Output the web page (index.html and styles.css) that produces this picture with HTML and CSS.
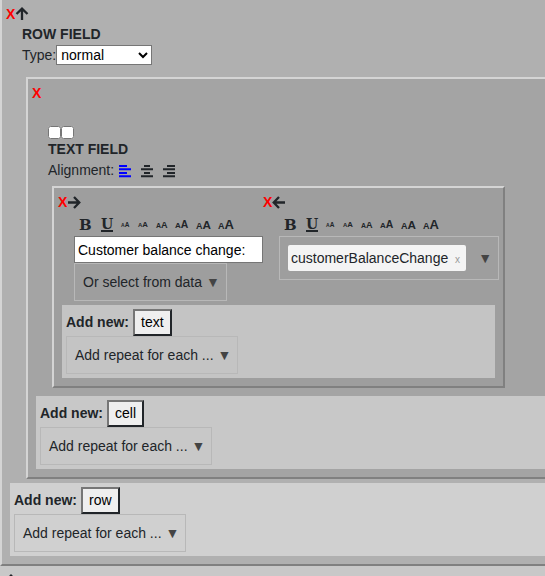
FILE: index.html
```
<!DOCTYPE html>
<html lang="en">

<head>
  <meta charset="utf-8">
  <title>Template editor</title>
  <link rel="stylesheet" href="styles.css">
</head>

<body>
  <!-- Shared icons -->
  <svg class="icon-defs" aria-hidden="true">
    <symbol id="arrow-right" viewBox="0 0 14 14"><path stroke-width="2.300" d="M1 7.500H12M7 2L12.300 7.500L7 13"/></symbol>
    <symbol id="arrow-left" viewBox="0 0 14 14"><path stroke-width="2.300" d="M13 7.500H2M7 2L1.700 7.500L7 13"/></symbol>
    <symbol id="arrow-up" viewBox="0 0 14 14"><path stroke-width="2.300" d="M7 13V2M1.500 7L7 1.700L12.500 7"/></symbol>
    <symbol id="align-left" viewBox="0 0 14 14"><path d="M1 2H9M1 5.300H13M1 9H9M1 12.300H13"/></symbol>
    <symbol id="align-center" viewBox="0 0 14 14"><path d="M4 2H10M1 5.300H13M4 9H10M1 12.300H13"/></symbol>
    <symbol id="align-right" viewBox="0 0 14 14"><path d="M5 2H13M1 5.300H13M5 9H13M1 12.300H13"/></symbol>
  </svg>

  <div class="box row">
    <div class="controls">
      <button type="button" class="remove">X</button>
      <button type="button" class="icon-button" aria-label="Move up"><svg class="icon"><use href="#arrow-up"/></svg></button>
    </div>
    <div class="content">
      <div class="title">ROW FIELD</div>
      <div class="line type-line">
        <label for="rowType">Type:</label>
        <select id="rowType" class="type-select">
          <option>normal</option>
          <option>header</option>
        </select>
      </div>

      <div class="box cell">
        <div class="controls">
          <button type="button" class="remove">X</button>
        </div>
        <div class="content cell-content">
          <div class="checks">
            <input type="checkbox" class="check" aria-label="First option">
            <input type="checkbox" class="check" aria-label="Second option">
          </div>
          <div class="title">TEXT FIELD</div>
          <div class="line">
            <span>Alignment:</span>
            <div class="alignment">
              <button type="button" class="icon-button active" aria-label="Left"><svg class="icon"><use href="#align-left"/></svg></button>
              <button type="button" class="icon-button" aria-label="Center"><svg class="icon"><use href="#align-center"/></svg></button>
              <button type="button" class="icon-button" aria-label="Right"><svg class="icon"><use href="#align-right"/></svg></button>
            </div>
          </div>

          <div class="box text">
            <div class="parts">
              <div class="part">
                <div class="controls">
                  <button type="button" class="remove">X</button>
                  <button type="button" class="icon-button" aria-label="Move right"><svg class="icon"><use href="#arrow-right"/></svg></button>
                </div>
                <div class="part-content">
                  <div class="toolbar">
                    <button type="button" class="format bold">B</button>
                    <button type="button" class="format underline">U</button>
                    <button type="button" class="size size-1">A<span>A</span></button>
                    <button type="button" class="size size-2">A<span>A</span></button>
                    <button type="button" class="size size-3">A<span>A</span></button>
                    <button type="button" class="size size-4">A<span>A</span></button>
                    <button type="button" class="size size-5">A<span>A</span></button>
                    <button type="button" class="size size-6">A<span>A</span></button>
                  </div>
                  <input type="text" class="text-input" aria-label="Text" value="Customer balance change:">
                  <button type="button" class="dropdown">Or select from data <span class="caret">▼</span></button>
                </div>
              </div>
              <div class="part">
                <div class="controls">
                  <button type="button" class="remove">X</button>
                  <button type="button" class="icon-button" aria-label="Move left"><svg class="icon"><use href="#arrow-left"/></svg></button>
                </div>
                <div class="part-content">
                  <div class="toolbar">
                    <button type="button" class="format bold">B</button>
                    <button type="button" class="format underline">U</button>
                    <button type="button" class="size size-1">A<span>A</span></button>
                    <button type="button" class="size size-2">A<span>A</span></button>
                    <button type="button" class="size size-3">A<span>A</span></button>
                    <button type="button" class="size size-4">A<span>A</span></button>
                    <button type="button" class="size size-5">A<span>A</span></button>
                    <button type="button" class="size size-6">A<span>A</span></button>
                  </div>
                  <div class="picker">
                    <div class="tag">customerBalanceChange <button type="button" class="tag-remove">x</button></div>
                    <button type="button" class="caret">▼</button>
                  </div>
                </div>
              </div>
            </div>
            <div class="add-new">
              <div class="add-line">
                <span>Add new:</span>
                <button type="button" class="add-button">text</button>
              </div>
              <button type="button" class="dropdown">Add repeat for each ... <span class="caret">▼</span></button>
            </div>
          </div>
        </div>
        <div class="add-new">
          <div class="add-line">
            <span>Add new:</span>
            <button type="button" class="add-button">cell</button>
          </div>
          <button type="button" class="dropdown">Add repeat for each ... <span class="caret">▼</span></button>
        </div>
      </div>
    </div>
    <div class="add-new">
      <div class="add-line">
        <span>Add new:</span>
        <button type="button" class="add-button">row</button>
      </div>
      <button type="button" class="dropdown">Add repeat for each ... <span class="caret">▼</span></button>
    </div>
  </div>

  <div class="next">
    <button type="button" class="icon-button" aria-label="Move up"><svg class="icon"><use href="#arrow-up"/></svg></button>
  </div>
</body>

</html>
```
FILE: styles.css
```
* {
  box-sizing: border-box;
}

body {
  margin: 0;
  overflow: hidden;
  height: 100vh;
  background-color: #c8c8c8;
  color: #212529;
  font-family: "Liberation Sans", Arial, sans-serif;
  font-size: 14px;
  line-height: 21px;
}

button,
input,
select {
  margin: 0;
  font: inherit;
  color: inherit;
}

button {
  padding: 0;
  border: none;
  background: none;
  cursor: pointer;
}

/* Nested boxes */
.box {
  border: 2px solid;
  border-color: #d4d4d4 #808080 #808080 #d4d4d4;
  padding: 4px 4px 8px;
}

.row {
  border-top: none;
  border-right: none;
  background-color: #b0b0b0;
}

.cell {
  margin: 11px 0 4px 4px;
  border-right: none;
  background-color: #a4a4a4;
}

.text {
  width: fit-content;
  margin: 5px 0 8px 4px;
  background-color: #9e9e9e;
}

.row,
.cell {
  padding-right: 0;
}

.content {
  padding-left: 16px;
}

.cell-content {
  padding-top: 23px;
}

/* Remove and move buttons */
.controls {
  display: flex;
  align-items: center;
  height: 20px;
}

.remove {
  color: #ff0000;
  font-weight: bold;
}

.icon-button {
  display: flex;
}

.icon {
  width: 14px;
  height: 14px;
  fill: none;
  stroke: currentColor;
  stroke-width: 2;
}

.icon-defs {
  display: none;
}

.title {
  font-weight: bold;
}

.line {
  display: flex;
  align-items: center;
  height: 21px;
}

.type-line {
  align-items: flex-start;
}

.type-select {
  width: 96px;
  height: 20px;
  border: 1px solid #767676;
  background-color: #fff;
  color: #000;
}

.checks {
  display: flex;
  height: 13px;
}

.check {
  width: 13px;
  height: 13px;
}

.alignment {
  display: flex;
  gap: 8px;
  margin-left: 4px;
}

.active {
  color: #0000ff;
}

/* Text parts */
.parts {
  display: flex;
}

.part-content {
  padding-left: 16px;
}

.toolbar {
  display: flex;
  align-items: center;
  gap: 8px;
  height: 24px;
  padding: 2px 0 0 5px;
}

.format {
  width: 12px;
  font-family: "DejaVu Serif", serif;
  font-size: 15px;
  font-weight: bold;
  line-height: 14px;
}

.underline {
  margin-left: 2px;
  border-bottom: 2px solid;
  font-size: 14px;
  line-height: 12px;
}

/* Text size buttons, smallest to largest */
.size {
  font-weight: bold;
  line-height: 16px;
  text-align: left;
  white-space: nowrap;
}

.size-1 { width: 9px; font-size: 5px; }
.size-2 { width: 10px; font-size: 6px; }
.size-3 { width: 11px; font-size: 7px; }
.size-4 { width: 13px; font-size: 8px; }
.size-5 { width: 14px; font-size: 9px; }
.size-6 { width: 15px; font-size: 9px; }

.size span {
  font-size: 130%;
}

.size-6 span {
  font-size: 13px;
}

.text-input {
  display: block;
  width: 189px;
  height: 27px;
  border: 1px solid #767676;
  padding: 1px 3px;
  background-color: #fff;
  color: #000;
}

/* Dropdowns */
.dropdown {
  display: block;
  height: 38px;
  border: 1px solid #b8b8b8;
  padding: 0 6px 0 8px;
}

.caret {
  color: #444;
}

.picker {
  display: flex;
  align-items: center;
  justify-content: space-between;
  width: 220px;
  height: 44px;
  border: 1px solid #b8b8b8;
  padding: 0 6px 0 8px;
}

.tag {
  height: 26px;
  border-radius: 2px;
  padding: 3px;
  background-color: #f4f4f4;
}

.tag-remove {
  padding: 0 3px;
  color: #999;
  font-size: 10px;
}

/* Add new panel */
.add-new {
  padding: 4px;
  background-color: #c4c4c4;
}

.text > .add-new {
  margin: 4px 4px 0;
}

.cell > .add-new {
  margin-left: 4px;
  background-color: #c8c8c8;
}

.row > .add-new {
  margin-left: 4px;
  background-color: #d0d0d0;
}

.add-line {
  display: flex;
  align-items: center;
  gap: 4px;
  font-weight: bold;
}

.add-button {
  height: 27px;
  border: 2px solid;
  border-color: #767676 #212529 #212529 #767676;
  padding: 0 6px;
  background-color: #efefef;
  color: #000;
  font-weight: normal;
}

.next {
  padding: 8px 4px;
}
```
